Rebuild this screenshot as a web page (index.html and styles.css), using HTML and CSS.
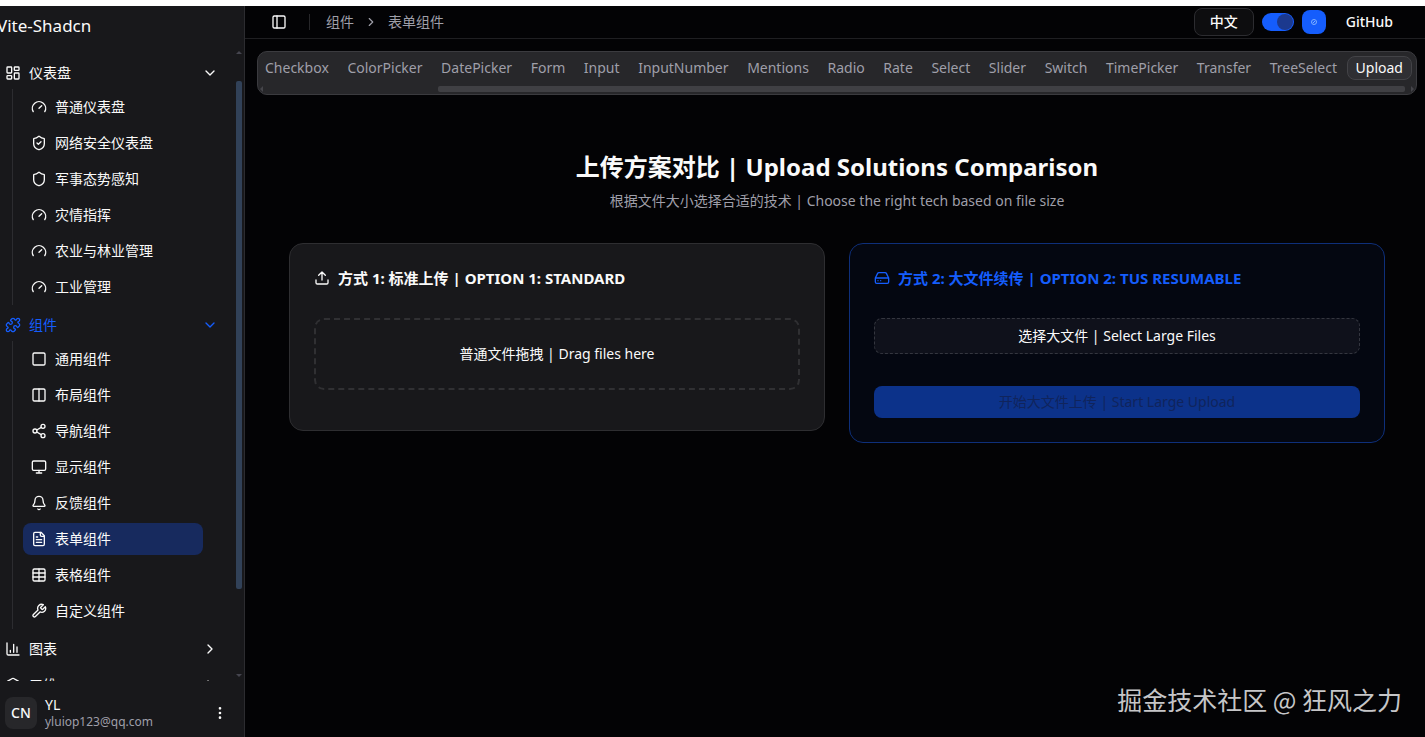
FILE: index.html
```html
<!DOCTYPE html>
<html lang="zh-CN">
<head>
<meta charset="utf-8">
<title>Vite-Shadcn</title>
<link rel="stylesheet" href="styles.css">
</head>
<body>
<div class="shell">
  <aside class="sidebar">
    <div class="brand">Vite-Shadcn</div>
    <div class="scroll">
      <nav class="nav">
        <button class="group" type="button">
          <svg class="icon" viewBox="0 0 24 24"><rect x="3" y="3" width="7" height="9" rx="1"/><rect x="14" y="3" width="7" height="5" rx="1"/><rect x="14" y="12" width="7" height="9" rx="1"/><rect x="3" y="16" width="7" height="5" rx="1"/></svg>
          <span>仪表盘</span>
          <svg class="icon chevron" viewBox="0 0 24 24"><path d="m6 9 6 6 6-6"/></svg>
        </button>
        <div class="sub">
          <a class="item" href="#"><svg class="icon" viewBox="0 0 24 24"><path d="m12 14 4-4"/><path d="M3.34 19a10 10 0 1 1 17.32 0"/></svg>普通仪表盘</a>
          <a class="item" href="#"><svg class="icon" viewBox="0 0 24 24"><path d="M20 13c0 5-3.5 7.5-7.66 8.95a1 1 0 0 1-.67-.01C7.5 20.5 4 18 4 13V6a1 1 0 0 1 1-1c2 0 4.500-1.200 6.240-2.720a1.170 1.170 0 0 1 1.520 0C14.510 3.810 17 5 19 5a1 1 0 0 1 1 1z"/><path d="m9 12 2 2 4-4"/></svg>网络安全仪表盘</a>
          <a class="item" href="#"><svg class="icon" viewBox="0 0 24 24"><path d="M20 13c0 5-3.5 7.500-7.660 8.950a1 1 0 0 1-.67-.01C7.500 20.500 4 18 4 13V6a1 1 0 0 1 1-1c2 0 4.500-1.200 6.240-2.720a1.170 1.170 0 0 1 1.520 0C14.510 3.810 17 5 19 5a1 1 0 0 1 1 1z"/></svg>军事态势感知</a>
          <a class="item" href="#"><svg class="icon" viewBox="0 0 24 24"><path d="m12 14 4-4"/><path d="M3.34 19a10 10 0 1 1 17.32 0"/></svg>灾情指挥</a>
          <a class="item" href="#"><svg class="icon" viewBox="0 0 24 24"><path d="m12 14 4-4"/><path d="M3.34 19a10 10 0 1 1 17.32 0"/></svg>农业与林业管理</a>
          <a class="item" href="#"><svg class="icon" viewBox="0 0 24 24"><path d="m12 14 4-4"/><path d="M3.34 19a10 10 0 1 1 17.32 0"/></svg>工业管理</a>
        </div>
        <button class="group current" type="button">
          <svg class="icon" viewBox="0 0 24 24"><path d="M15.390 4.390a1 1 0 0 0 1.680-.474 2.500 2.500 0 1 1 3.014 3.015 1 1 0 0 0-.474 1.680l1.683 1.682a2.414 2.414 0 0 1 0 3.414L19.610 15.390a1 1 0 0 1-1.680-.474 2.500 2.500 0 1 0-3.014 3.015 1 1 0 0 1 .474 1.680l-1.683 1.682a2.414 2.414 0 0 1-3.414 0L8.610 19.610a1 1 0 0 0-1.680.474 2.500 2.500 0 1 1-3.014-3.015 1 1 0 0 0 .474-1.680l-1.683-1.682a2.414 2.414 0 0 1 0-3.414L4.390 8.610a1 1 0 0 1 1.680.474 2.500 2.500 0 1 0 3.014-3.015 1 1 0 0 1-.474-1.680l1.683-1.682a2.414 2.414 0 0 1 3.414 0z"/></svg>
          <span>组件</span>
          <svg class="icon chevron" viewBox="0 0 24 24"><path d="m6 9 6 6 6-6"/></svg>
        </button>
        <div class="sub">
          <a class="item" href="#"><svg class="icon" viewBox="0 0 24 24"><rect x="3" y="3" width="18" height="18" rx="2"/></svg>通用组件</a>
          <a class="item" href="#"><svg class="icon" viewBox="0 0 24 24"><rect x="3" y="3" width="18" height="18" rx="2"/><path d="M12 3v18"/></svg>布局组件</a>
          <a class="item" href="#"><svg class="icon" viewBox="0 0 24 24"><circle cx="18" cy="5" r="3"/><circle cx="6" cy="12" r="3"/><circle cx="18" cy="19" r="3"/><path d="m8.590 13.510 6.830 3.980M15.410 6.510l-6.820 3.980"/></svg>导航组件</a>
          <a class="item" href="#"><svg class="icon" viewBox="0 0 24 24"><rect x="2" y="3" width="20" height="14" rx="2"/><path d="M8 21h8M12 17v4"/></svg>显示组件</a>
          <a class="item" href="#"><svg class="icon" viewBox="0 0 24 24"><path d="M10.268 21a2 2 0 0 0 3.464 0"/><path d="M3.262 15.326A1 1 0 0 0 4 17h16a1 1 0 0 0 .74-1.673C19.410 13.956 18 12.499 18 8A6 6 0 0 0 6 8c0 4.499-1.411 5.956-2.738 7.326"/></svg>反馈组件</a>
          <a class="item active" href="#" aria-current="page"><svg class="icon" viewBox="0 0 24 24"><path d="M15 2H6a2 2 0 0 0-2 2v16a2 2 0 0 0 2 2h12a2 2 0 0 0 2-2V7Z"/><path d="M14 2v4a2 2 0 0 0 2 2h4M10 9H8M16 13H8M16 17H8"/></svg>表单组件</a>
          <a class="item" href="#"><svg class="icon" viewBox="0 0 24 24"><rect x="3" y="3" width="18" height="18" rx="2"/><path d="M12 3v18M3 9h18M3 15h18"/></svg>表格组件</a>
          <a class="item" href="#"><svg class="icon" viewBox="0 0 24 24"><path d="M14.700 6.300a1 1 0 0 0 0 1.400l1.600 1.600a1 1 0 0 0 1.400 0l3.770-3.770a6 6 0 0 1-7.940 7.940l-6.910 6.910a2.120 2.120 0 0 1-3-3l6.910-6.910a6 6 0 0 1 7.940-7.940l-3.760 3.760z"/></svg>自定义组件</a>
        </div>
        <button class="group" type="button">
          <svg class="icon" viewBox="0 0 24 24"><path d="M3 3v16a2 2 0 0 0 2 2h16M18 17V9M13 17V5M8 17v-3"/></svg>
          <span>图表</span>
          <svg class="icon chevron" viewBox="0 0 24 24"><path d="m9 18 6-6-6-6"/></svg>
        </button>
        <button class="group" type="button">
          <svg class="icon" viewBox="0 0 24 24"><path d="M21 8a2 2 0 0 0-1-1.730l-7-4a2 2 0 0 0-2 0l-7 4A2 2 0 0 0 3 8v8a2 2 0 0 0 1 1.730l7 4a2 2 0 0 0 2 0l7-4A2 2 0 0 0 21 16Z"/><path d="m3.300 7 8.700 5 8.700-5M12 22V12"/></svg>
          <span>三维</span>
          <svg class="icon chevron" viewBox="0 0 24 24"><path d="m9 18 6-6-6-6"/></svg>
        </button>
      </nav>
      <div class="vbar"><i class="arrow up"></i><i class="vthumb"></i><i class="arrow down"></i></div>
    </div>
    <footer class="user">
      <span class="avatar">CN</span>
      <div class="who"><span class="name">YL</span><span class="mail">yluiop123@qq.com</span></div>
      <button class="more" type="button" aria-label="More"><svg class="icon" viewBox="0 0 24 24"><circle cx="12" cy="12" r="1"/><circle cx="12" cy="5" r="1"/><circle cx="12" cy="19" r="1"/></svg></button>
    </footer>
  </aside>

  <div class="page">
    <header class="topbar">
      <button class="toggle" type="button" aria-label="Toggle sidebar"><svg class="icon" viewBox="0 0 24 24"><rect x="3" y="3" width="18" height="18" rx="2"/><path d="M9 3v18"/></svg></button>
      <span class="divider"></span>
      <nav class="crumbs"><a href="#">组件</a><svg class="icon small" viewBox="0 0 24 24"><path d="m9 18 6-6-6-6"/></svg><a href="#">表单组件</a></nav>
      <div class="tools">
        <button class="lang" type="button">中文</button>
        <input class="switch" type="checkbox" role="switch" aria-label="Dark mode" checked>
        <button class="theme" type="button" aria-label="Theme"><svg class="dot" viewBox="0 0 8 8"><circle cx="4" cy="4" r="2.500"/><path d="M3 5l2-2"/></svg></button>
        <a class="github" href="#">GitHub</a>
      </div>
    </header>
    <main class="main">
      <div class="tabs">
        <div class="tablist" role="tablist">
          <button class="tab" role="tab">Checkbox</button>
          <button class="tab" role="tab">ColorPicker</button>
          <button class="tab" role="tab">DatePicker</button>
          <button class="tab" role="tab">Form</button>
          <button class="tab" role="tab">Input</button>
          <button class="tab" role="tab">InputNumber</button>
          <button class="tab" role="tab">Mentions</button>
          <button class="tab" role="tab">Radio</button>
          <button class="tab" role="tab">Rate</button>
          <button class="tab" role="tab">Select</button>
          <button class="tab" role="tab">Slider</button>
          <button class="tab" role="tab">Switch</button>
          <button class="tab" role="tab">TimePicker</button>
          <button class="tab" role="tab">Transfer</button>
          <button class="tab" role="tab">TreeSelect</button>
          <button class="tab selected" role="tab" aria-selected="true">Upload</button>
        </div>
        <div class="hbar"><i class="arrow left"></i><i class="hthumb"></i><i class="arrow right"></i></div>
      </div>
      <section class="content">
        <h1>上传方案对比 | Upload Solutions Comparison</h1>
        <p class="lead">根据文件大小选择合适的技术 | Choose the right tech based on file size</p>
        <div class="cards">
          <article class="card">
            <h2><svg class="icon" viewBox="0 0 24 24"><path d="M12 3v12M17 8l-5-5-5 5M21 15v4a2 2 0 0 1-2 2H5a2 2 0 0 1-2-2v-4"/></svg>方式 1: 标准上传 | OPTION 1: STANDARD</h2>
            <button class="drop" type="button">普通文件拖拽 | Drag files here</button>
          </article>
          <article class="card blue">
            <h2><svg class="icon" viewBox="0 0 24 24"><path d="M22 12H2M5.450 5.110 2 12v6a2 2 0 0 0 2 2h16a2 2 0 0 0 2-2v-6l-3.450-6.890A2 2 0 0 0 16.760 4H7.240a2 2 0 0 0-1.790 1.110zM6 16h.01M10 16h.01"/></svg>方式 2: 大文件续传 | OPTION 2: TUS RESUMABLE</h2>
            <button class="pick" type="button">选择大文件 | Select Large Files</button>
            <button class="start" type="button" disabled>开始大文件上传 | Start Large Upload</button>
          </article>
        </div>
      </section>
    </main>
  </div>
  <div class="watermark">掘金技术社区 @ 狂风之力</div>
</div>
</body>
</html>
```

FILE: styles.css
```css
* { box-sizing: border-box; }
body {
  margin: 0;
  background: #030305;
  color: #fafafa;
  font: 14px/20px "Noto Sans", "Noto Sans CJK SC", sans-serif;
}
button {
  font: inherit;
  color: inherit;
  background: none;
  border: 0;
  padding: 0;
}
a { color: inherit; text-decoration: none; }
.icon {
  width: 16px;
  height: 16px;
  flex: none;
  fill: none;
  stroke: currentColor;
  stroke-width: 2;
  stroke-linecap: round;
  stroke-linejoin: round;
}
.icon.small { width: 14px; height: 14px; }

.shell {
  position: relative;
  display: flex;
  height: 100vh;
  border-top: 6px solid #fff;
  overflow: hidden;
}

.sidebar {
  display: flex;
  flex-direction: column;
  flex: none;
  width: 256px;
  margin-left: -11px;
  background: #18181b;
  border-right: 1px solid #2c2c30;
}
.brand {
  padding: 8px 8px 13px;
  font-size: 17px;
  line-height: 24px;
}
.scroll { display: flex; flex: 1; min-height: 0; }
.nav {
  display: flex;
  flex-direction: column;
  gap: 4px;
  flex: 1;
  padding: 6px 8px;
  overflow: hidden;
}
.group {
  display: flex;
  align-items: center;
  gap: 8px;
  flex: none;
  height: 32px;
  padding: 0 8px;
}
.group .chevron { margin-left: auto; }
.group.current { color: #155dfc; }
.sub {
  display: flex;
  flex-direction: column;
  gap: 4px;
  flex: none;
  margin: -4px 0 0 15px;
  padding: 2px 23px 2px 10px;
  border-left: 1px solid #2c2c30;
}
.item {
  display: flex;
  align-items: center;
  gap: 8px;
  height: 32px;
  padding: 0 8px;
  border-radius: 8px;
}
.item.active { background: #172a5e; }

.vbar {
  display: flex;
  flex-direction: column;
  align-items: center;
  justify-content: space-between;
  width: 10px;
  padding-right: 1px;
}
.vthumb {
  width: 6px;
  height: 508px;
  margin-bottom: 58px;
  border-radius: 2px;
  background: #314158;
}
.arrow { border: 3px solid transparent; }
.arrow.up { border-top: 0; border-bottom-color: #45454f; }
.arrow.down { border-bottom: 0; border-top-color: #45454f; margin-bottom: 4px; }

.user {
  display: flex;
  align-items: center;
  gap: 8px;
  height: 56px;
  padding: 8px 16px 0;
}
.avatar {
  display: grid;
  place-items: center;
  width: 32px;
  height: 32px;
  border-radius: 8px;
  background: #27272a;
  font-weight: 500;
}
.who { display: flex; flex-direction: column; flex: 1; }
.name { line-height: 18px; }
.mail { font-size: 12px; line-height: 16px; color: #9f9fa9; }
.more { display: flex; }

.page { display: flex; flex-direction: column; flex: 1; min-width: 0; }
.topbar {
  display: flex;
  align-items: center;
  height: 33px;
  padding: 0 32px 0 26px;
  border-bottom: 1px solid #1f1f22;
}
.toggle { display: flex; }
.divider {
  width: 1px;
  height: 16px;
  margin: 0 16px 0 22px;
  background: #27272a;
}
.crumbs { display: flex; align-items: center; gap: 10px; color: #9f9fa9; }
.tools { display: flex; align-items: center; gap: 8px; margin-left: auto; }
.lang {
  width: 60px;
  height: 28px;
  border: 1px solid #2c2c30;
  border-radius: 8px;
  background: #0d0d0f;
  font-weight: 500;
}
.switch {
  appearance: none;
  display: flex;
  justify-content: flex-end;
  width: 32px;
  height: 18px;
  margin: 0;
  padding: 1px;
  border-radius: 9px;
  background: #155dfc;
}
.switch::before {
  content: "";
  width: 16px;
  height: 16px;
  border-radius: 50%;
  background: #1c398e;
}
.theme {
  display: grid;
  place-items: center;
  width: 24px;
  height: 24px;
  border-radius: 8px;
  background: #155dfc;
}
.dot { width: 8px; height: 8px; fill: none; stroke: #7fb0ff; stroke-width: 1; }
.github { margin-left: 12px; font-weight: 500; }

.main { display: flex; flex-direction: column; padding: 12px 8px 0 12px; }
.tabs {
  padding: 4px 4px 2px 0;
  border: 1px solid #3b3b3f;
  border-radius: 10px;
  background: #27272a;
  overflow: hidden;
}
.tablist { display: flex; justify-content: space-between; height: 29px; }
.tab {
  height: 24px;
  padding: 0 8px;
  margin-left: -2px;
  border: 1px solid transparent;
  border-radius: 8px;
  color: #9f9fa9;
  white-space: nowrap;
}
.tab.selected { background: #2f2f33; border-color: #434347; color: #fafafa; }
.hbar { display: flex; align-items: center; height: 7px; }
.hthumb {
  flex: 1;
  height: 6px;
  margin: 0 6px 0 175px;
  border-radius: 2px;
  background: #404044;
}
.arrow.left { border-left: 0; border-right-color: #45454a; margin-left: 2px; }
.arrow.right { border-right: 0; border-left-color: #45454a; margin-right: -2px; }

.content { padding: 56px 32px 0; text-align: center; }
h1 { margin: 0; font-size: 24px; line-height: 32px; font-weight: 700; }
.lead { margin: 8px 0 32px; color: #9f9fa9; }
.cards {
  display: grid;
  grid-template-columns: 1fr 1fr;
  gap: 24px;
  align-items: start;
}
.card {
  display: flex;
  flex-direction: column;
  padding: 24px;
  border: 1px solid #2e2e31;
  border-radius: 14px;
  background: #18181b;
}
.card h2 {
  display: flex;
  align-items: center;
  gap: 8px;
  margin: 0 0 30px;
  font-size: 15px;
  line-height: 20px;
  font-weight: 700;
}
.drop {
  height: 72px;
  margin-bottom: 16px;
  border: 2px dashed #303033;
  border-radius: 10px;
}
.card.blue { background: #040711; border-color: #0e2f7a; }
.card.blue h2 { color: #155dfc; }
.pick {
  height: 36px;
  margin-bottom: 32px;
  border: 1px dashed #34363f;
  border-radius: 8px;
  background: #0f111b;
}
.start {
  height: 32px;
  border-radius: 8px;
  background: #0c328a;
  color: #10245c;
}
.watermark {
  position: absolute;
  right: 23px;
  bottom: 20px;
  font: 25px/36px "Noto Sans CJK SC", sans-serif;
  color: #c6c6c8;
}
```
